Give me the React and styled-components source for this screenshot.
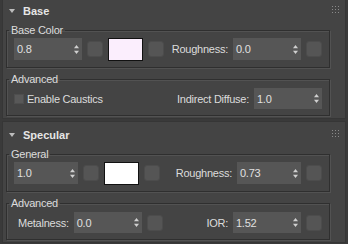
import React from 'react';
import styled, { createGlobalStyle } from 'styled-components';

const GlobalStyle = createGlobalStyle`
  html, body {
    margin: 0;
    padding: 0;
    background: #383838;
  }
  body {
    font-family: "Liberation Sans", Arial, sans-serif;
    font-size: 11px;
    letter-spacing: -0.25px;
    color: #dcdcdc;
  }
`;

const Panel = styled.div`
  width: 348px;
  height: 244px;
  overflow: hidden;
  padding: 0 2px;
  box-sizing: border-box;
  background: #3a3a3a;
`;

const Rollout = styled.section`
  background: #444444;
  border: 1px solid #363636;
  margin-top: ${(p) => p.offset || 0}px;
  margin-bottom: 2px;
  padding: 0 0 2px 0;
`;

const Header = styled.div`
  display: flex;
  align-items: center;
  height: 25px;
  padding-left: 6px;
`;

const Title = styled.span`
  font-weight: bold;
  letter-spacing: 0;
  color: #e6e6e6;
  margin-left: 8px;
`;

const Grip = styled.svg`
  margin-left: auto;
  margin-right: 6px;
  margin-top: -3px;
`;

const Group = styled.fieldset`
  margin: ${(p) => p.top}px 15px 0 3px;
  padding: 0 7px ${(p) => p.bottom}px 7px;
  border: 1px solid #2f2f2f;
  box-shadow: 1px 1px 0 #525252, inset 1px 1px 0 #525252;
  min-width: 0;
`;

const Legend = styled.legend`
  padding: 0 2px;
  margin-left: -5px;
  line-height: 13px;
  color: #dcdcdc;
`;

const Row = styled.div`
  display: flex;
  align-items: center;
  gap: 5px;
  height: ${(p) => p.h}px;
  margin-top: ${(p) => p.mt}px;
`;

const Spinner = styled.div`
  display: flex;
  align-items: center;
  justify-content: space-between;
  width: ${(p) => p.w}px;
  height: ${(p) => p.h}px;
  background: #565656;
  padding: 0 3px 0 3px;
  box-sizing: border-box;
  color: #e0e0e0;
  flex-shrink: 0;
`;

const MapSlot = styled.div`
  width: 16px;
  height: 16px;
  background: #555555;
  border: 1px solid #4c4c4c;
  border-radius: 3px;
  box-sizing: border-box;
  flex-shrink: 0;
`;

const Swatch = styled.div`
  width: 35px;
  height: 23px;
  background: ${(p) => p.color};
  border: 1px solid #111111;
  box-sizing: border-box;
  flex-shrink: 0;
`;

const Label = styled.span`
  flex: ${(p) => (p.grow ? 1 : 'none')};
  text-align: ${(p) => (p.grow ? 'right' : 'left')};
  margin-left: ${(p) => p.ml || 0}px;
  white-space: nowrap;
`;

const Check = styled.div`
  width: 10px;
  height: 10px;
  background: #585858;
  border: 1px solid #4e4e4e;
  box-sizing: border-box;
  margin-right: -2px;
  flex-shrink: 0;
`;

const Arrows = () => (
  <svg width="5" height="9" viewBox="0 0 5 9">
    <path d="M2.5 0 L5 3.3 L0 3.3 Z" fill="#d0d0d0" />
    <path d="M2.5 9 L5 5.7 L0 5.7 Z" fill="#d0d0d0" />
  </svg>
);

const NumberField = ({ value, w, h = 22 }) => (
  <Spinner w={w} h={h}>
    <span>{value}</span>
    <Arrows />
  </Spinner>
);

const RolloutHeader = ({ title }) => (
  <Header>
    <svg width="6" height="4" viewBox="0 0 6 4">
      <path d="M0 0 L6 0 L3 4 Z" fill="#bdbdbd" />
    </svg>
    <Title>{title}</Title>
    <Grip width="7" height="7" viewBox="0 0 7 7">
      {[0, 3, 6].map((x) =>
        [0, 3, 6].map((y) => (
          <rect key={`${x}-${y}`} x={x} y={y} width="1" height="1" fill="#8a8a8a" />
        ))
      )}
    </Grip>
  </Header>
);

export default function App() {
  return (
    <>
      <GlobalStyle />
      <Panel>
        <Rollout offset={-3}>
          <RolloutHeader title="Base" />
          <Group top={1} bottom={7}>
            <Legend>Base Color</Legend>
            <Row h={22} mt={1}>
              <NumberField value="0.8" w={68} />
              <MapSlot />
              <Swatch color="#fbeefd" />
              <MapSlot />
              <Label grow>Roughness:</Label>
              <NumberField value="0.0" w={68} />
              <MapSlot />
            </Row>
          </Group>
          <Group top={5} bottom={6}>
            <Legend>Advanced</Legend>
            <Row h={21} mt={2}>
              <Check />
              <Label>Enable Caustics</Label>
              <Label grow>Indirect Diffuse:</Label>
              <NumberField value="1.0" w={68} h={21} />
            </Row>
          </Group>
        </Rollout>
        <Rollout>
          <RolloutHeader title="Specular" />
          <Group top={1} bottom={7}>
            <Legend>General</Legend>
            <Row h={22} mt={1}>
              <NumberField value="1.0" w={64} />
              <MapSlot />
              <Swatch color="#ffffff" />
              <MapSlot />
              <Label grow>Roughness:</Label>
              <NumberField value="0.73" w={64} />
              <MapSlot />
            </Row>
          </Group>
          <Group top={5} bottom={6}>
            <Legend>Advanced</Legend>
            <Row h={21} mt={2}>
              <Label ml={4}>Metalness:</Label>
              <NumberField value="0.0" w={68} h={21} />
              <MapSlot />
              <Label grow>IOR:</Label>
              <NumberField value="1.52" w={68} h={21} />
              <MapSlot />
            </Row>
          </Group>
        </Rollout>
      </Panel>
    </>
  );
}
